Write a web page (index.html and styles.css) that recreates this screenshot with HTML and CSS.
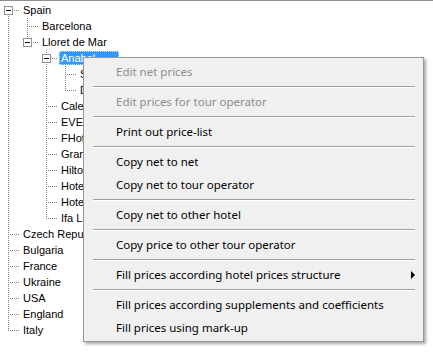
FILE: index.html
```html
<!DOCTYPE html>
<html lang="en">
<head>
  <meta charset="UTF-8" />
  <title>Hotel prices</title>
  <link rel="stylesheet" href="styles.css">
</head>
<body>
  <div class="tree-view">
    <ul class="tree">
      <li class="first open">
        <div class="row"><span class="box"></span><span class="label">Spain</span></div>
        <ul>
          <li><div class="row"><span class="label">Barcelona</span></div></li>
          <li class="open">
            <div class="row"><span class="box"></span><span class="label">Lloret de Mar</span></div>
            <ul>
              <li class="open">
                <div class="row"><span class="box"></span><span class="label selected">Anabel</span></div>
                <ul>
                  <li><div class="row"><span class="label">Standard</span></div></li>
                  <li><div class="row"><span class="label">Double</span></div></li>
                </ul>
              </li>
              <li><div class="row"><span class="label">Calella Park</span></div></li>
              <li><div class="row"><span class="label">EVENIA Olympic</span></div></li>
              <li><div class="row"><span class="label">FHotel</span></div></li>
              <li><div class="row"><span class="label">Gran Garbi</span></div></li>
              <li><div class="row"><span class="label">Hilton</span></div></li>
              <li><div class="row"><span class="label">Hotel Rosamar</span></div></li>
              <li><div class="row"><span class="label">Hotel Fenals</span></div></li>
              <li><div class="row"><span class="label">Ifa Lloret</span></div></li>
            </ul>
          </li>
        </ul>
      </li>
      <li><div class="row"><span class="label">Czech Republic</span></div></li>
      <li><div class="row"><span class="label">Bulgaria</span></div></li>
      <li><div class="row"><span class="label">France</span></div></li>
      <li><div class="row"><span class="label">Ukraine</span></div></li>
      <li><div class="row"><span class="label">USA</span></div></li>
      <li><div class="row"><span class="label">England</span></div></li>
      <li><div class="row"><span class="label">Italy</span></div></li>
    </ul>

    <div class="context-menu">
      <div class="item disabled">Edit net prices</div>
      <div class="sep"></div>
      <div class="item disabled">Edit prices for tour operator</div>
      <div class="sep"></div>
      <div class="item">Print out price-list</div>
      <div class="sep"></div>
      <div class="item">Copy net to net</div>
      <div class="item">Copy net to tour operator</div>
      <div class="sep"></div>
      <div class="item">Copy net to other hotel</div>
      <div class="sep"></div>
      <div class="item">Copy price to other tour operator</div>
      <div class="sep"></div>
      <div class="item submenu">Fill prices according hotel prices structure</div>
      <div class="sep"></div>
      <div class="item">Fill prices according supplements and coefficients</div>
      <div class="item">Fill prices using mark-up</div>
    </div>
  </div>
</body>
</html>
```

FILE: styles.css
```css
:root {
  --line: #808080;
  --menu-bg: #f0f0f0;
  --menu-border: #979797;
  --sep: #a0a0a0;
  --disabled: #8d8d8d;
  --select: #3399ff;
}

body {
  margin: 0;
  padding: 0;
  background: #ffffff;
  font-family: "Liberation Sans", Arial, sans-serif;
  font-size: 11px;
  color: #000000;
}

.tree-view {
  position: relative;
  width: 433px;
  height: 354px;
  border-top: 1px solid #8f8f8f;
  box-sizing: border-box;
  padding-top: 1px;
  overflow: hidden;
}

/* tree */
.tree,
.tree ul {
  list-style: none;
  margin: 0;
  padding: 0;
}

.tree ul {
  margin-left: 19px;
}

.tree li {
  position: relative;
}

/* vertical connector */
.tree li::before {
  content: "";
  position: absolute;
  left: 8px;
  top: 0;
  bottom: 0;
  width: 1px;
  background: repeating-linear-gradient(to bottom, var(--line) 0 1px, transparent 1px 2px);
}

.tree li:last-child::before {
  bottom: auto;
  height: 9px;
}

.tree li.first::before {
  top: 8px;
}

/* horizontal connector */
.tree li::after {
  content: "";
  position: absolute;
  left: 9px;
  top: 8px;
  width: 11px;
  height: 1px;
  background: repeating-linear-gradient(to right, transparent 0 1px, var(--line) 1px 2px);
}

.row {
  position: relative;
  height: 16px;
  display: flex;
  align-items: center;
  padding-left: 22px;
  white-space: nowrap;
}

.label {
  padding: 0 2px;
  line-height: 14px;
  margin-left: -1px;
}

.label.selected {
  background: var(--select);
  color: #ffffff;
  outline: 1px dotted #c9e4ff;
  outline-offset: -1px;
  padding: 0 24px 0 2px;
}

.box {
  position: absolute;
  z-index: 1;
  left: 4px;
  top: 4px;
  width: 7px;
  height: 7px;
  border: 1px solid #919191;
  background: #ffffff;
}

.box::after {
  content: "";
  position: absolute;
  left: 1px;
  top: 3px;
  width: 5px;
  height: 1px;
  background: #000000;
}

/* context menu */
.context-menu {
  position: absolute;
  z-index: 2;
  left: 83px;
  top: 56px;
  width: 339px;
  padding: 2px 0;
  background: var(--menu-bg);
  border: 1px solid var(--menu-border);
  box-shadow: 2px 2px 3px rgba(0, 0, 0, 0.35);
  font-family: "Noto Sans", "Open Sans", sans-serif;
  font-size: 11.5px;
}

.item {
  position: relative;
  height: 23px;
  line-height: 23px;
  padding-left: 32px;
  white-space: nowrap;
}

.item.disabled {
  color: var(--disabled);
}

.item.submenu::after {
  content: "";
  position: absolute;
  right: 8px;
  top: 8px;
  border-left: 4px solid #000000;
  border-top: 4px solid transparent;
  border-bottom: 4px solid transparent;
}

.sep {
  height: 7px;
  display: flex;
  align-items: center;
  padding: 0 8px 0 9px;
}

.sep::before {
  content: "";
  flex: 1;
  height: 1px;
  background: var(--sep);
  box-shadow: 0 1px 0 #ffffff;
}
```
